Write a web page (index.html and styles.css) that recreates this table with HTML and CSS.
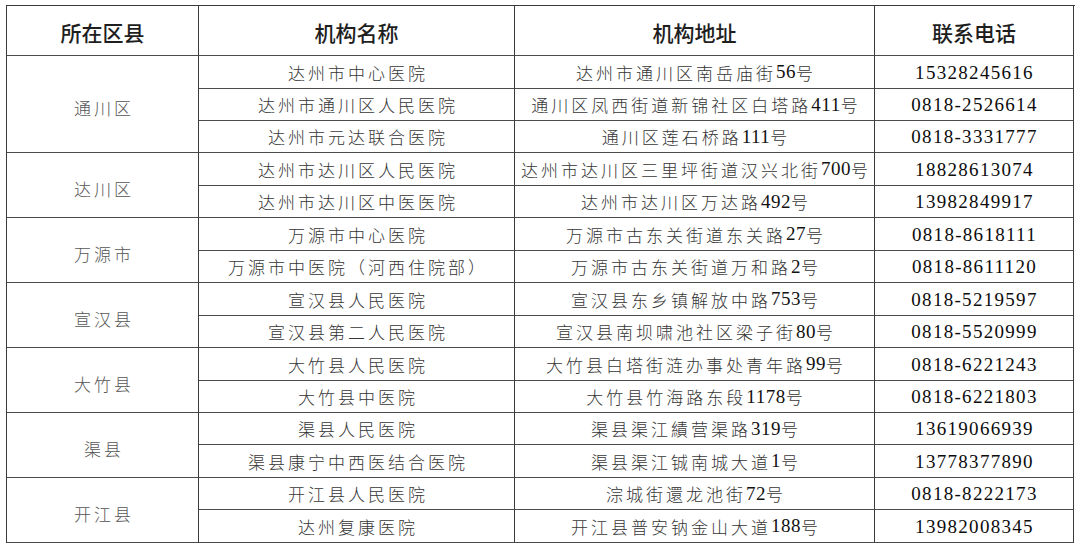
FILE: index.html
```html
<!DOCTYPE html>
<html lang="zh-CN">
<head>
<meta charset="utf-8">
<title>达州市医疗机构</title>
<link rel="stylesheet" href="styles.css">
</head>
<body>
<div class="page">
  <div class="table">
    <div class="th">所在区县</div>
    <div class="th">机构名称</div>
    <div class="th">机构地址</div>
    <div class="th">联系电话</div>

    <div class="dist span3">通川区</div>
    <div class="td name">达州市中心医院</div>
    <div class="td addr">达州市通川区南岳庙街<span class="n">56</span>号</div>
    <div class="td tel">15328245616</div>
    <div class="td name">达州市通川区人民医院</div>
    <div class="td addr">通川区凤西街道新锦社区白塔路<span class="n">411</span>号</div>
    <div class="td tel">0818-2526614</div>
    <div class="td name">达州市元达联合医院</div>
    <div class="td addr">通川区莲石桥路<span class="n">111</span>号</div>
    <div class="td tel">0818-3331777</div>

    <div class="dist span2">达川区</div>
    <div class="td name">达州市达川区人民医院</div>
    <div class="td addr">达州市达川区三里坪街道汉兴北街<span class="n">700</span>号</div>
    <div class="td tel">18828613074</div>
    <div class="td name">达州市达川区中医医院</div>
    <div class="td addr">达州市达川区万达路<span class="n">492</span>号</div>
    <div class="td tel">13982849917</div>

    <div class="dist span2">万源市</div>
    <div class="td name">万源市中心医院</div>
    <div class="td addr">万源市古东关街道东关路<span class="n">27</span>号</div>
    <div class="td tel">0818-8618111</div>
    <div class="td name">万源市中医院（河西住院部）</div>
    <div class="td addr">万源市古东关街道万和路<span class="n">2</span>号</div>
    <div class="td tel">0818-8611120</div>

    <div class="dist span2">宣汉县</div>
    <div class="td name">宣汉县人民医院</div>
    <div class="td addr">宣汉县东乡镇解放中路<span class="n">753</span>号</div>
    <div class="td tel">0818-5219597</div>
    <div class="td name">宣汉县第二人民医院</div>
    <div class="td addr">宣汉县南坝啸池社区梁子街<span class="n">80</span>号</div>
    <div class="td tel">0818-5520999</div>

    <div class="dist span2">大竹县</div>
    <div class="td name">大竹县人民医院</div>
    <div class="td addr">大竹县白塔街涟办事处青年路<span class="n">99</span>号</div>
    <div class="td tel">0818-6221243</div>
    <div class="td name">大竹县中医院</div>
    <div class="td addr">大竹县竹海路东段<span class="n">1178</span>号</div>
    <div class="td tel">0818-6221803</div>

    <div class="dist span2">渠县</div>
    <div class="td name">渠县人民医院</div>
    <div class="td addr">渠县渠江績营渠路<span class="n">319</span>号</div>
    <div class="td tel">13619066939</div>
    <div class="td name">渠县康宁中西医结合医院</div>
    <div class="td addr">渠县渠江铖南城大道<span class="n">1</span>号</div>
    <div class="td tel">13778377890</div>

    <div class="dist span2">开江县</div>
    <div class="td name">开江县人民医院</div>
    <div class="td addr">淙城街還龙池街<span class="n">72</span>号</div>
    <div class="td tel">0818-8222173</div>
    <div class="td name">达州复康医院</div>
    <div class="td addr">开江县普安钠金山大道<span class="n">188</span>号</div>
    <div class="td tel">13982008345</div>
  </div>
</div>
</body>
</html>
```

FILE: styles.css
```css
html, body {
  margin: 0;
  padding: 0;
  background: #ffffff;
}

.page {
  padding: 5px 6px 0 6px;
}

.table {
  display: grid;
  grid-template-columns: 192px 316px 360px 199px;
  grid-template-rows: 50px 33px 32px 32px 33px 32px 33px 32px 33px 32px 33px 32px 32px 33px 32px 33px;
  width: 1068px;
  border-top: 1px solid #3a3a3a;
  border-left: 1px solid #3a3a3a;
}

.th, .td, .dist {
  display: flex;
  align-items: center;
  justify-content: center;
  border-right: 1px solid #3a3a3a;
  border-bottom: 1px solid #4a4a4a;
  white-space: nowrap;
  overflow: hidden;
}

.th {
  font-family: "Noto Sans CJK SC", sans-serif;
  font-size: 21px;
  font-weight: 500;
  color: #1e1e1e;
  padding-top: 3px;
}

.dist {
  grid-column: 1;
  font-family: "Liberation Serif", "Noto Sans CJK SC", serif;
  font-size: 17px;
  font-weight: 300;
  letter-spacing: 3px;
  padding-left: 3px;
  padding-top: 6px;
  color: #555;
}

.span3 { grid-row: span 3; }
.span2 { grid-row: span 2; }

.name, .addr {
  font-family: "Liberation Serif", "Noto Sans CJK SC", serif;
  font-size: 17px;
  font-weight: 300;
  letter-spacing: 3px;
  padding-left: 3px;
  color: #363636;
}

.name { grid-column: 2; }
.addr { grid-column: 3; }

.n {
  font-family: "Liberation Serif", serif;
  font-size: 19px;
  font-weight: 400;
  letter-spacing: 0.5px;
  color: #111;
}

.tel {
  grid-column: 4;
  font-family: "Liberation Serif", serif;
  font-size: 19px;
  letter-spacing: 1.3px;
  padding-left: 1px;
  padding-top: 1px;
  color: #0c0c0c;
}
```
